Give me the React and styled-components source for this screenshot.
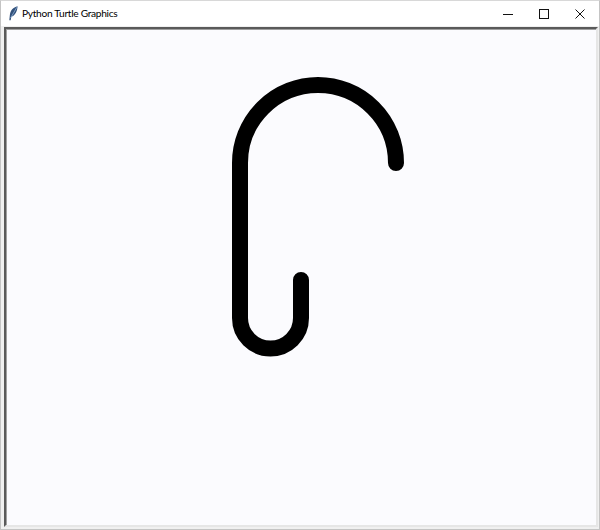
import React from "react";
import styled, { createGlobalStyle } from "styled-components";

const Global = createGlobalStyle`
  html, body { margin: 0; padding: 0; background: #ffffff; }
  body { font-family: "Lato", "Noto Sans", sans-serif; }
`;

const Window = styled.div`
  width: 600px;
  height: 530px;
  box-sizing: border-box;
  display: flex;
  flex-direction: column;
  background: #f0f0f0;
  border: 1px solid #c4c4c4;
  border-top-color: #d8d8d8;
  overflow: hidden;
`;

const TitleBar = styled.div`
  height: 25px;
  flex: none;
  display: flex;
  align-items: center;
  background: #ffffff;
  padding-left: 7px;
`;

const Title = styled.span`
  font-family: "Lato", "Noto Sans", sans-serif;
  font-size: 10.2px;
  color: #000;
  margin-left: 4px;
  line-height: 1;
  letter-spacing: -0.3px;
  flex: 1;
`;

const Controls = styled.div`
  display: flex;
  height: 100%;
  margin-right: 1px;
`;

const CtrlButton = styled.div`
  width: 36px;
  height: 100%;
  display: flex;
  align-items: center;
  justify-content: center;
`;

const Body = styled.div`
  flex: 1;
  display: flex;
  padding: 1px 1px 2px 3px;
`;

const Canvas = styled.div`
  flex: 1;
  box-sizing: border-box;
  border-style: solid;
  border-width: 2px;
  border-color: #5a5a5a #e6e6e6 #e6e6e6 #5a5a5a;
  background: #fbfbfe;
  box-shadow: inset 1px 1px 0 #a0a0a0;
  display: flex;
`;

const Drawing = styled.svg`
  display: block;
  width: 100%;
  height: 100%;
`;

function Feather() {
  return (
    <svg width="10" height="15" viewBox="0 0 10 15">
      <path d="M9.6 0.3 C5.2 1.2 2.2 4.6 1.8 9.5 L1.3 14.2 L2.7 14.2 L3.2 11 C7 9.6 9.3 5.4 9.6 0.3 Z" fill="#33527c" />
      <path d="M8.9 1.2 L2.6 12" stroke="#8fb0d6" strokeWidth="0.8" />
    </svg>
  );
}

export default function App() {
  return (
    <>
      <Global />
      <Window>
        <TitleBar>
          <Feather />
          <Title>Python Turtle Graphics</Title>
          <Controls>
            <CtrlButton>
              <svg width="10" height="10" viewBox="0 0 10 10">
                <path d="M0 5.5 H10" stroke="#111" strokeWidth="1" />
              </svg>
            </CtrlButton>
            <CtrlButton>
              <svg width="10" height="10" viewBox="0 0 10 10">
                <rect x="0.5" y="0.5" width="9" height="9" fill="none" stroke="#111" strokeWidth="1" />
              </svg>
            </CtrlButton>
            <CtrlButton>
              <svg width="10" height="10" viewBox="0 0 10 10">
                <path d="M0.5 0.5 L9.5 9.5 M9.5 0.5 L0.5 9.5" stroke="#111" strokeWidth="1" />
              </svg>
            </CtrlButton>
          </Controls>
        </TitleBar>
        <Body>
          <Canvas>
            <Drawing viewBox="6 29 590 496" preserveAspectRatio="xMinYMin meet">
              <path
                d="M396 163 A78 78 0 0 0 240 163 L240 318 A30.5 30.5 0 0 0 301 318 L301 280"
                fill="none"
                stroke="#000"
                strokeWidth="16"
                strokeLinecap="round"
                strokeLinejoin="round"
              />
            </Drawing>
          </Canvas>
        </Body>
      </Window>
    </>
  );
}
